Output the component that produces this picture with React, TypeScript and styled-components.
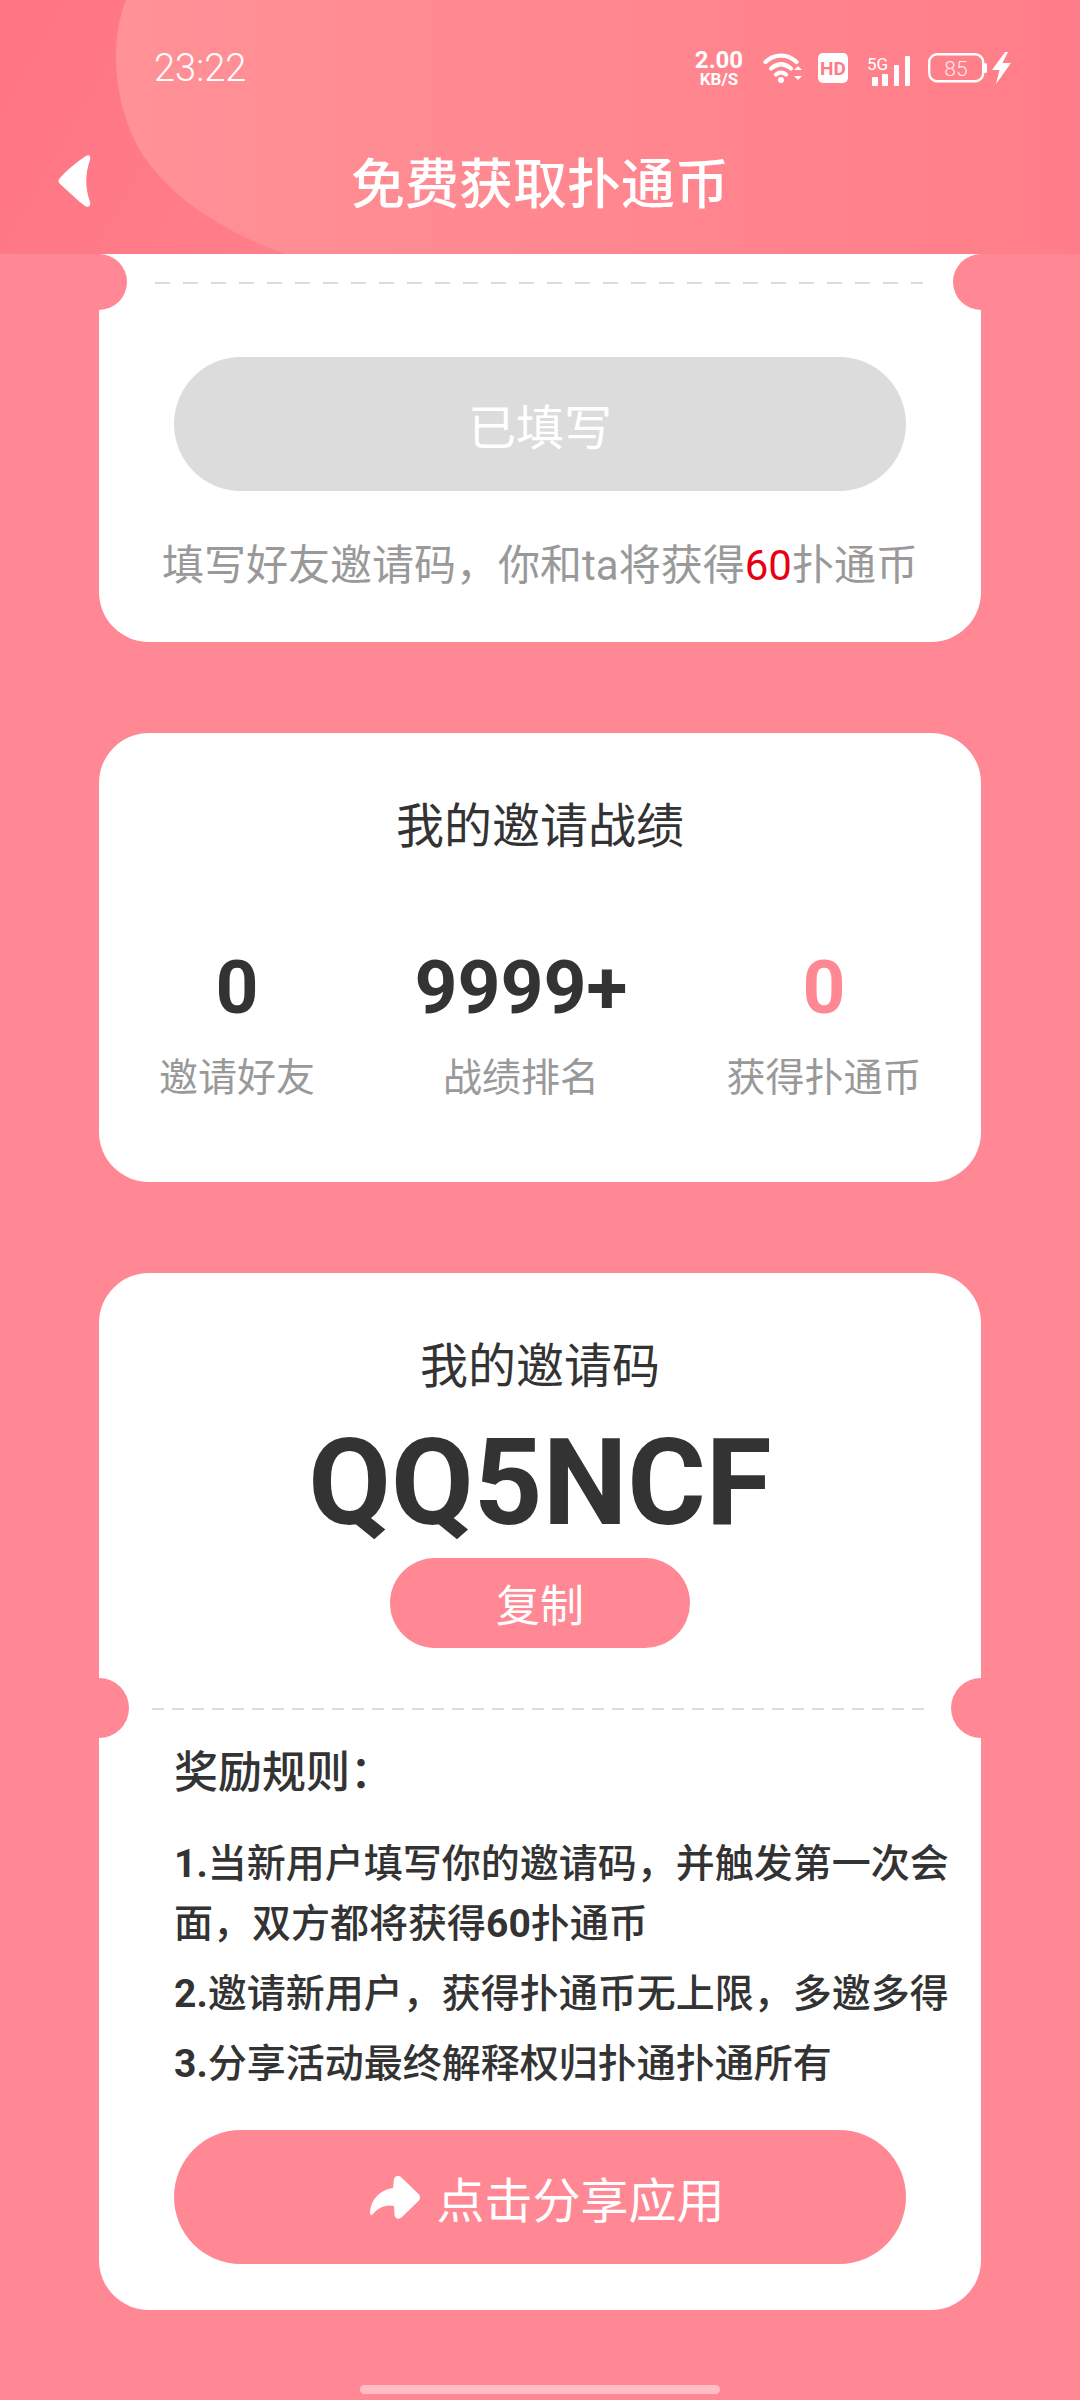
import styled, { createGlobalStyle } from 'styled-components';

const GlobalStyle = createGlobalStyle`
  html, body {
    margin: 0;
    padding: 0;
    background: #ff8894;
  }
  * {
    box-sizing: border-box;
  }
`;

const FONT = `Roboto, "Noto Sans CJK SC", sans-serif`;

const Screen = styled.div`
  position: relative;
  display: flex;
  flex-direction: column;
  width: 1080px;
  height: 2400px;
  overflow: hidden;
  background: #ff8894;
  font-family: ${FONT};
`;

const Header = styled.header`
  position: relative;
  flex: none;
  height: 254px;
  overflow: hidden;
  background: linear-gradient(120deg, #ff7482 0%, #ff828d 45%, #ff7a86 100%);
  color: #fff;
`;

const HeaderBlob = styled.svg`
  position: absolute;
  top: 0;
  left: 0;
`;

const StatusBar = styled.div`
  position: relative;
  display: flex;
  align-items: center;
  justify-content: space-between;
  height: 60px;
  margin-top: 38px;
  padding: 0 69px 0 154px;
`;

const Clock = styled.span`
  font-size: 38px;
  font-weight: 300;
`;

const StatusIcons = styled.div`
  display: flex;
  align-items: center;
`;

const Speed = styled.div`
  display: flex;
  flex-direction: column;
  align-items: center;
  width: 52px;
  margin-right: 18px;
  padding-top: 2px;
  font-weight: 700;
  & b {
    font-size: 24px;
    font-weight: 700;
    line-height: 20px;
  }
  & span {
    font-size: 17px;
    line-height: 18px;
  }
`;

const StatusIcon = styled.svg<{ $gap: number }>`
  display: block;
  flex: none;
  margin-left: ${p => p.$gap}px;
`;

const NavBar = styled.div`
  position: relative;
  display: flex;
  align-items: center;
  justify-content: center;
  height: 90px;
  margin-top: 37px;
`;

const BackIcon = styled.svg`
  position: absolute;
  left: 57px;
  top: 19px;
`;

const Title = styled.h1`
  margin: 0;
  font-size: 54px;
  font-weight: 500;
`;

const Content = styled.main`
  display: flex;
  flex-direction: column;
  gap: 91px;
  padding: 0 99px;
`;

const Card = styled.section<{ $flatTop?: boolean; $padding: string }>`
  position: relative;
  display: flex;
  flex-direction: column;
  width: 882px;
  padding: ${p => p.$padding};
  border-radius: ${p => (p.$flatTop ? '0 0 50px 50px' : '50px')};
  background: #fff;
`;

const Notch = styled.span<{ $side: 'left' | 'right'; $top: number; $size: number }>`
  position: absolute;
  top: ${p => p.$top}px;
  ${p => p.$side}: ${p => -p.$size / 2}px;
  width: ${p => p.$size}px;
  height: ${p => p.$size}px;
  border-radius: 50%;
  background: #ff8894;
`;

const DashRow = styled.div<{ $top: number; $left: number }>`
  padding: ${p => p.$top}px 0 0 ${p => p.$left}px;
  & svg {
    display: block;
  }
`;

const PillButton = styled.div<{ $disabled?: boolean; $top?: number }>`
  display: flex;
  align-items: center;
  justify-content: center;
  width: 732px;
  height: 134px;
  margin: ${p => p.$top ?? 0}px auto 0;
  border-radius: 67px;
  background: ${p => (p.$disabled ? '#dcdcdc' : '#ff8894')};
  color: #fff;
  font-size: 48px;
`;

const ShareLabel = styled.span`
  display: flex;
  align-items: center;
  gap: 15px;
  margin-left: 15px;
`;

const Hint = styled.p`
  margin: 48px 0 0;
  color: #999;
  font-size: 42px;
  line-height: 54px;
  text-align: center;
  & em {
    color: #e60012;
    font-style: normal;
  }
`;

const CardTitle = styled.h2`
  margin: 0;
  color: #333;
  font-size: 48px;
  font-weight: 400;
  line-height: 60px;
  text-align: center;
`;

const Stats = styled.div`
  display: grid;
  grid-template-columns: 276px 292px 314px;
  margin-top: 88px;
`;

const Stat = styled.div`
  display: flex;
  flex-direction: column;
  align-items: center;
`;

const StatValue = styled.span<{ $accent?: boolean }>`
  color: ${p => (p.$accent ? '#ff8894' : '#333')};
  font-size: 75px;
  font-weight: 700;
  line-height: 84px;
`;

const StatLabel = styled.span`
  margin-top: 22px;
  color: #999;
  font-size: 39px;
  line-height: 54px;
`;

const Code = styled.div`
  margin-top: 18px;
  color: #333;
  font-size: 120px;
  font-weight: 700;
  line-height: 136px;
  text-align: center;
`;

const CopyButton = styled.div`
  display: flex;
  align-items: center;
  justify-content: center;
  width: 300px;
  height: 90px;
  margin: 7px auto 0;
  border-radius: 45px;
  background: #ff8894;
  color: #fff;
  font-size: 44px;
`;

const Rules = styled.div`
  padding: 0 31px 0 75px;
  color: #333;
`;

const RulesTitle = styled.h3`
  margin: 33px 0 0;
  font-size: 44px;
  font-weight: 500;
  line-height: 60px;
`;

const RuleList = styled.div`
  margin-top: 31px;
  font-size: 39px;
  font-weight: 500;
  line-height: 60px;
  & p {
    margin: 0 0 10px;
  }
  & b {
    font-weight: 700;
  }
`;

const HomeBar = styled.div`
  position: absolute;
  left: 360px;
  bottom: 6px;
  width: 360px;
  height: 9px;
  border-radius: 5px;
  background: #ffbcc3;
`;

function Wifi() {
  return (
    <StatusIcon $gap={0} width="40" height="30" viewBox="0 0 40 30" fill="none" stroke="#fff" strokeWidth="4.2" strokeLinecap="round">
      <path d="M2.5 9C11 0.5 25 0.5 33.5 9" />
      <path d="M8 15.5C14.5 10 21.5 10 28 15.5" />
      <path d="M13 21.5C16 19 20 19 23 21.5" />
      <circle cx="18" cy="27" r="3" fill="#fff" stroke="none" />
      <path d="M31 17l4-4 4 4zM31 23l4 4 4-4z" fill="#fff" stroke="none" />
    </StatusIcon>
  );
}

function HdBadge() {
  return (
    <StatusIcon $gap={15} width="30" height="30" viewBox="0 0 30 30">
      <rect width="30" height="30" rx="5" fill="#fff" />
      <text x="15" y="22" textAnchor="middle" fill="#ff7a86" fontSize="19" fontWeight="700" fontFamily="Roboto, sans-serif">HD</text>
    </StatusIcon>
  );
}

function Signal() {
  return (
    <StatusIcon $gap={19} width="44" height="36" viewBox="0 -6 44 36">
      <text x="0" y="14" fill="#fff" fontSize="17" fontFamily="Roboto, sans-serif">5G</text>
      <g fill="#fff">
        <rect x="5" y="21" width="6" height="9" rx="1" />
        <rect x="15" y="18" width="6" height="12" rx="1" />
        <rect x="27" y="9" width="5" height="21" rx="1" />
        <rect x="38" y="0" width="5" height="30" rx="1" />
      </g>
    </StatusIcon>
  );
}

function Battery() {
  return (
    <StatusIcon $gap={17} width="83" height="32" viewBox="0 0 83 32">
      <rect x="1.2" y="2.2" width="54" height="27" rx="8" fill="none" stroke="#fff" strokeWidth="2.4" />
      <rect x="56" y="11" width="3" height="10" rx="1.5" fill="#fff" />
      <text x="28" y="23.5" textAnchor="middle" fill="#fff" fillOpacity="0.85" fontSize="21" fontWeight="300" fontFamily="Roboto, sans-serif">85</text>
      <path d="M77 0L64 18H71.5L68 32L83 11H74.5L80 0Z" fill="#fff" />
    </StatusIcon>
  );
}

function DashLine({ width, dash, gap }: { width: number; dash: number; gap: number }) {
  return (
    <svg width={width} height="2" viewBox={`0 0 ${width} 2`}>
      <line x1="0" y1="1" x2={width} y2="1" stroke="#dcdcdc" strokeWidth="2" strokeDasharray={`${dash} ${gap}`} />
    </svg>
  );
}

export default function App() {
  return (
    <Screen>
      <GlobalStyle />
      <Header>
        <HeaderBlob width="1080" height="254" viewBox="0 0 1080 254">
          <defs>
            <linearGradient id="blob" x1="0" y1="0" x2="1" y2="0">
              <stop offset="0" stopColor="#ff9197" />
              <stop offset="1" stopColor="#ff7d88" />
            </linearGradient>
          </defs>
          <path d="M126 0C112 35 112 85 130 130C152 185 212 228 286 254H1080V0Z" fill="url(#blob)" />
        </HeaderBlob>
        <StatusBar>
          <Clock>23:22</Clock>
          <StatusIcons>
            <Speed>
              <b>2.00</b>
              <span>KB/S</span>
            </Speed>
            <Wifi />
            <HdBadge />
            <Signal />
            <Battery />
          </StatusIcons>
        </StatusBar>
        <NavBar>
          <BackIcon width="36" height="54" viewBox="0 0 36 54">
            <path d="M29 2C32 0 34 2 33 6C28 20 28 34 33 48C34 52 31 54 28 52C20 46 10 36 3 30C1 28 1 26 3 24C10 16 20 8 29 2Z" fill="#fff" />
          </BackIcon>
          <Title>免费获取扑通币</Title>
        </NavBar>
      </Header>

      <Content>
        <Card $flatTop $padding="0 0 49px">
          <Notch $side="left" $top={0} $size={56} />
          <Notch $side="right" $top={0} $size={56} />
          <DashRow $top={28} $left={56}>
            <DashLine width={768} dash={15} gap={13} />
          </DashRow>
          <PillButton $disabled $top={73}>已填写</PillButton>
          <Hint>
            填写好友邀请码，你和ta将获得<em>60</em>扑通币
          </Hint>
        </Card>

        <Card $padding="64px 0 77px">
          <CardTitle>我的邀请战绩</CardTitle>
          <Stats>
            <Stat>
              <StatValue>0</StatValue>
              <StatLabel>邀请好友</StatLabel>
            </Stat>
            <Stat>
              <StatValue>9999+</StatValue>
              <StatLabel>战绩排名</StatLabel>
            </Stat>
            <Stat>
              <StatValue $accent>0</StatValue>
              <StatLabel>获得扑通币</StatLabel>
            </Stat>
          </Stats>
        </Card>

        <Card $padding="64px 0 46px">
          <Notch $side="left" $top={405} $size={60} />
          <Notch $side="right" $top={405} $size={60} />
          <CardTitle>我的邀请码</CardTitle>
          <Code>QQ5NCF</Code>
          <CopyButton>复制</CopyButton>
          <DashRow $top={60} $left={53}>
            <DashLine width={778} dash={12} gap={8} />
          </DashRow>
          <Rules>
            <RulesTitle>奖励规则：</RulesTitle>
            <RuleList>
              <p><b>1.</b>当新用户填写你的邀请码，并触发第一次会面，双方都将获得<b>60</b>扑通币</p>
              <p><b>2.</b>邀请新用户，获得扑通币无上限，多邀多得</p>
              <p><b>3.</b>分享活动最终解释权归扑通扑通所有</p>
            </RuleList>
          </Rules>
          <PillButton $top={26}>
            <ShareLabel>
              <svg width="51" height="43" viewBox="0 0 51 43">
                <path d="M24 3C25 -0.5 29 -1 31 1L48.5 18C50.5 20 50.5 23 48.5 25L32 41C29 44 25 43 24.5 39L24 30C15 28 8 32 3 38C1 40 0 39 0 36C1 23 10 14 23 12Z" fill="#fff" />
              </svg>
              点击分享应用
            </ShareLabel>
          </PillButton>
        </Card>
      </Content>
      <HomeBar />
    </Screen>
  );
}
